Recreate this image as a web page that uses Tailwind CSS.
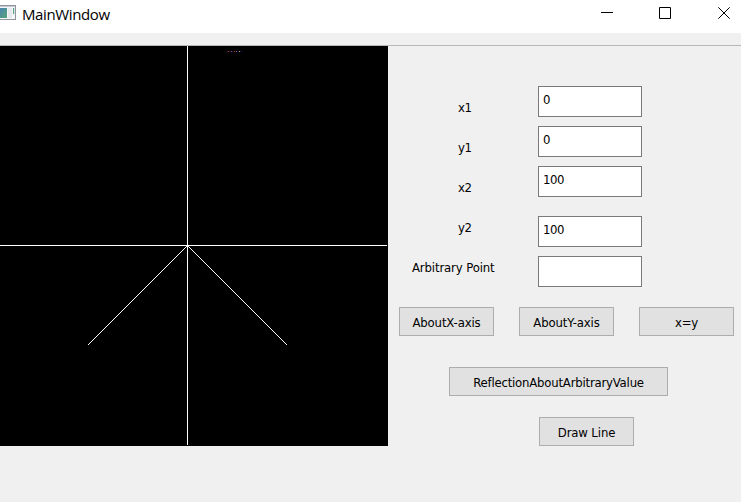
<!DOCTYPE html>
<html lang="en">
<head>
<meta charset="utf-8">
<title>MainWindow</title>
<script src="https://cdn.jsdelivr.net/npm/@tailwindcss/browser@4"></script>
</head>
<body class="flex h-[502px] w-[741px] flex-col overflow-hidden bg-[#f0f0f0] text-[13px] leading-[16px] tracking-[-0.13px] text-black font-['DejaVu_Sans_Condensed','DejaVu_Sans',sans-serif]">
<header class="flex h-[33px] shrink-0 bg-white">
  <svg class="mt-[4px] block shrink-0" width="17" height="18" viewBox="0 0 17 18">
    <defs><linearGradient id="g" x1="0" y1="0" x2="1" y2="1"><stop offset="0" stop-color="#4a83b4"/><stop offset="1" stop-color="#55a477"/></linearGradient></defs>
    <rect x="-1" y="1.5" width="16.5" height="14" fill="#f5f6f8" stroke="#8f959d"/>
    <rect x="0" y="2" width="15" height="1" fill="#c5cad2"/>
    <rect x="-1" y="4" width="8" height="10" fill="url(#g)"/>
    <rect x="8" y="4" width="4" height="10" fill="#e7e9ee"/>
    <rect x="13" y="4" width="1.2" height="6" fill="#58a388"/>
  </svg>
  <h1 class="ml-[5px] mt-[4px] w-[90px] whitespace-nowrap font-['Open_Sans',sans-serif] text-[15px] leading-[20px] tracking-[-0.38px]">MainWindow</h1>
  <svg class="ml-auto block" width="161" height="33" viewBox="0 0 161 33" fill="none" stroke="#000" stroke-width="1">
    <path d="M21 12.5H33"/><path d="M79.5 7.5h11v11h-11z"/><path d="M138.3 7.3l11.4 11.4M149.7 7.3l-11.4 11.4"/>
  </svg>
</header>
<div class="h-[13px] shrink-0 border-b border-[#b4b9b4]"></div>
<main class="flex">
  <svg class="block shrink-0 bg-black" width="388" height="400" viewBox="0 0 388 400">
    <g shape-rendering="crispEdges" fill="#fff"><rect x="187" y="0" width="1" height="399"/><rect x="0" y="199" width="387" height="1"/></g>
    <path d="M187.5 199.5L88 299M187.5 199.5L287 299" stroke="#fff" stroke-width="1" shape-rendering="crispEdges"/>
    <g shape-rendering="crispEdges"><path d="M226 5.5h16" stroke="#181030"/><path d="M228 5.5h1M234 5.5h1" stroke="#c22"/><path d="M231 5.5h1M236 5.5h1" stroke="#649"/><path d="M239 5.5h1" stroke="#9a7"/></g>
  </svg>
  <section class="flex w-[353px] flex-col">
    <div class="flex h-[261px]">
      <div class="flex w-[150px] flex-col pt-[42px]">
        <label class="flex h-10 items-center pl-[70px] tracking-[-0.5px]">x1</label>
        <label class="flex h-10 items-center pl-[70px] tracking-[-0.5px]">y1</label>
        <label class="flex h-10 items-center pl-[70px] tracking-[-0.5px]">x2</label>
        <label class="flex h-10 items-center pl-[70px] tracking-[-0.5px]">y2</label>
        <label class="flex h-10 items-center whitespace-nowrap pl-6">Arbitrary Point</label>
      </div>
      <div class="flex w-[104px] flex-col gap-[9px] pt-10">
        <div class="h-[31px] border border-[#7a7a7a] bg-white pl-1 pt-[5px]">0</div>
        <div class="h-[31px] border border-[#7a7a7a] bg-white pl-1 pt-[5px]">0</div>
        <div class="h-[31px] border border-[#7a7a7a] bg-white pl-1 pt-[5px] tracking-[-0.4px]">100</div>
        <div class="mt-[10px] h-[31px] border border-[#7a7a7a] bg-white pl-1 pt-[5px] tracking-[-0.4px]">100</div>
        <div class="h-[31px] border border-[#7a7a7a] bg-white"></div>
      </div>
    </div>
    <div class="flex gap-[25px] pl-[11px] whitespace-nowrap">
      <button class="h-[29px] w-[95px] border border-[#adadad] bg-[#e1e1e1] pt-[2px]">AboutX-axis</button>
      <button class="h-[29px] w-[95px] border border-[#adadad] bg-[#e1e1e1] pt-[2px]">AboutY-axis</button>
      <button class="h-[29px] w-[95px] border border-[#adadad] bg-[#e1e1e1] pt-[2px]">x=y</button>
    </div>
    <button class="ml-[61px] mt-[31px] h-[29px] w-[219px] border border-[#adadad] bg-[#e1e1e1] pt-[2px] tracking-[-0.2px]">ReflectionAboutArbitraryValue</button>
    <button class="ml-[151px] mt-[21px] h-[29px] w-[95px] border border-[#adadad] bg-[#e1e1e1] pt-[2px]">Draw Line</button>
  </section>
</main>
</body>
</html>
